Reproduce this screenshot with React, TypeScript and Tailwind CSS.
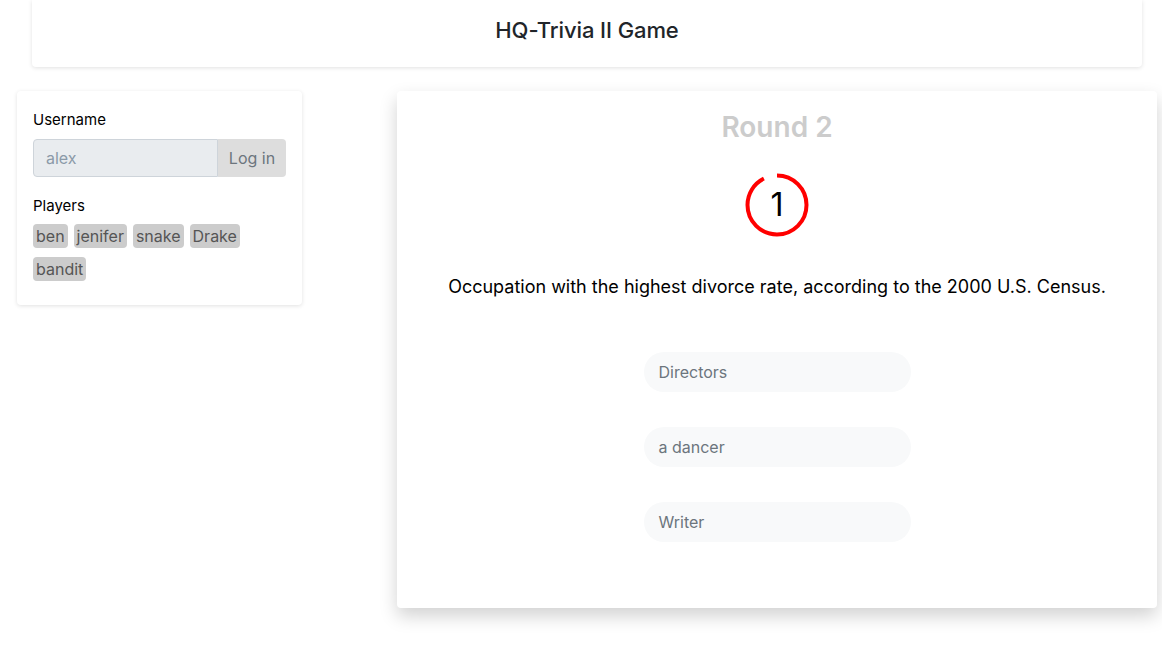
const players = ["ben", "jenifer", "snake", "Drake", "bandit"];
const answers = ["Directors", "a dancer", "Writer"];

function Timer({ value }: { value: number }) {
  const r = 29.5;
  const c = 2 * Math.PI * r;
  const shown = c * (333 / 360);
  return (
    <div className="relative w-[64px] h-[64px]">
      <svg width="64" height="64" viewBox="0 0 64 64" className="absolute inset-0">
        <circle
          cx="32"
          cy="32"
          r={r}
          fill="none"
          stroke="#ff0000"
          strokeWidth="4"
          strokeDasharray={`${shown} ${c}`}
          transform="rotate(-90 32 32)"
        />
      </svg>
      <div className="absolute inset-0 flex items-center justify-center text-[32px] text-black leading-none">
        {value}
      </div>
    </div>
  );
}

export default function App() {
  return (
    <div className="min-h-[667px] bg-white text-[#212529] font-['Inter','Liberation_Sans',sans-serif]">
      <header className="mx-[32px] mr-[20px] h-[67px] pb-[6px] flex items-center justify-center bg-white rounded-b shadow-[0_1px_4px_rgba(0,0,0,0.12)]">
        <h1 className="text-[22px] font-medium tracking-[-0.1px]">HQ-Trivia II Game</h1>
      </header>

      <div className="flex items-start mt-[24px]">
        <aside className="ml-[17px] w-[285px] bg-white rounded shadow-[0_1px_4px_rgba(0,0,0,0.12)] px-[16px] pt-[18px] pb-[24px]">
          <label className="block text-[15px] text-black mb-[7px]">Username</label>
          <div className="flex h-[38px] text-[16px]">
            <input
              disabled
              placeholder="alex"
              className="flex-1 min-w-0 bg-[#e9ecef] border border-[#ced4da] rounded-l px-[12px] placeholder:text-[#8b9aa8]"
            />
            <button className="w-[68px] bg-[#dddddd] text-[#6c757d] rounded-r">Log in</button>
          </div>
          <div className="text-[15px] text-black mt-[18px] mb-[7px]">Players</div>
          <div className="flex flex-wrap gap-x-[6px] gap-y-[9px]">
            {players.map((p) => (
              <span key={p} className="bg-[#cccccc] text-[#555555] text-[16px] leading-[24px] px-[3px] rounded">
                {p}
              </span>
            ))}
          </div>
        </aside>

        <main className="ml-[95px] w-[760px] bg-white rounded shadow-[0_8px_18px_rgba(0,0,0,0.18)] flex flex-col items-center pt-[18px] pb-[66px]">
          <h2 className="text-[28px] font-semibold text-[#cccccc] leading-[36px]">Round 2</h2>
          <div className="mt-[28px]">
            <Timer value={1} />
          </div>
          <p className="mt-[36px] text-[18px] text-black">
            Occupation with the highest divorce rate, according to the 2000 U.S. Census.
          </p>
          <div className="mt-[52px] flex flex-col gap-[35px]">
            {answers.map((a) => (
              <div
                key={a}
                className="w-[267px] h-[40px] rounded-full bg-[#f8f9fa] text-[#6c757d] text-[16px] flex items-center px-[15px]"
              >
                {a}
              </div>
            ))}
          </div>
        </main>
      </div>
    </div>
  );
}
